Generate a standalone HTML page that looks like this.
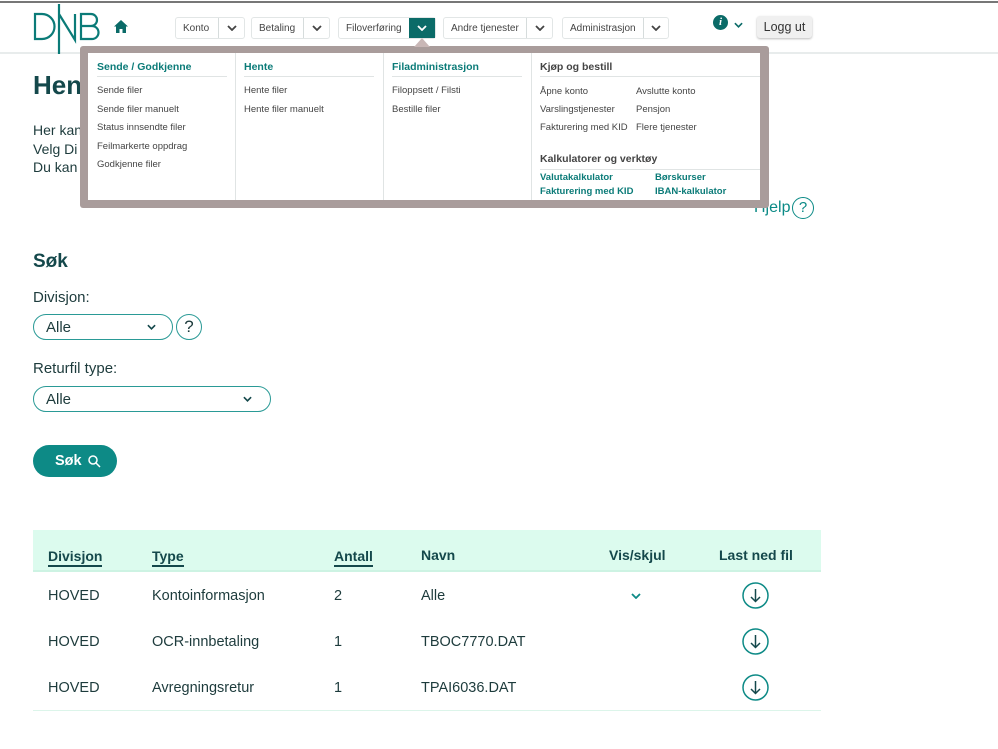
<!DOCTYPE html>
<html><head><meta charset="utf-8"><style>
*{margin:0;padding:0;box-sizing:border-box}
body{width:998px;height:749px;background:#fff;position:relative;overflow:hidden;font-family:"Liberation Sans",sans-serif;color:#1d3b3c}
.a{position:absolute;white-space:nowrap}
.nb{position:absolute;top:17px;height:22px;border:1px solid #e2e6e6;border-radius:3px;background:#fff;font-size:10px;color:#444;display:flex;align-items:center;white-space:nowrap}
.nb span{padding:0 7px;flex:1}
.nb i{border-left:1px solid #d6dcdc;height:100%;width:26px;display:flex;align-items:center;justify-content:center;flex:none}
.hd{font-size:10.5px;font-weight:bold;color:#0b7b78}
.lk{font-size:9.5px;color:#444}
.tl{font-size:9.5px;font-weight:bold;color:#0b7b78}
.th{font-size:14px;font-weight:bold;color:#14484b}
.u{border-bottom:2px solid #14484b;padding-bottom:1px}
.td{font-size:14.5px;color:#1d3b3c}
.sel{position:absolute;border:1.5px solid #2a9a96;border-radius:14px;height:26px;font-size:15px;padding:4px 12px}
</style></head><body>
<div class="a" style="left:0;top:1px;width:998px;height:2px;background:#777"></div>
<div class="a" style="left:0;top:52px;width:998px;height:2px;background:#e8ecec"></div>
<!-- logo -->
<svg class="a" style="left:30px;top:2px" width="80" height="54" viewBox="0 0 80 54">
<g fill="none" stroke="#0b7b78" stroke-width="2.2">
<path d="M5 12h7a12 12 0 0 1 0 25H5z"/>
<path d="M29 52V2M29 12l16 26V12"/>
<path d="M51 12h10a6 6 0 0 1 0 12H51zM51 24h11a6.5 6.5 0 0 1 0 13H51z"/>
</g></svg>
<svg class="a" style="left:114px;top:20px" width="14" height="13" viewBox="0 0 14 13"><path d="M7 0L0 6.5h2V13h3.5V9h3v4H12V6.5h2z" fill="#0b6b68"/></svg>
<svg width="0" height="0" style="position:absolute"><defs><symbol id="cv" viewBox="0 0 10 6"><path d="M1 1l4 4 4-4" fill="none" stroke="currentColor" stroke-width="1.8"/></symbol></defs></svg>
<div class="nb" style="left:175px;width:70px"><span>Konto</span><i><svg width="10" height="6" style="color:#444"><use href="#cv"/></svg></i></div>
<div class="nb" style="left:251px;width:79px"><span>Betaling</span><i><svg width="10" height="6" style="color:#444"><use href="#cv"/></svg></i></div>
<div class="nb" style="left:338px;width:98px"><span>Filoverføring</span><i style="background:#0b6b68;border:none"><svg width="10" height="6" style="color:#fff"><use href="#cv"/></svg></i></div>
<div class="nb" style="left:443px;width:110px"><span>Andre tjenester</span><i><svg width="10" height="6" style="color:#444"><use href="#cv"/></svg></i></div>
<div class="nb" style="left:562px;width:107px"><span>Administrasjon</span><i><svg width="10" height="6" style="color:#444"><use href="#cv"/></svg></i></div>
<div class="a" style="left:713px;top:15px;width:15px;height:15px;border-radius:50%;background:#0b6b68;color:#fff;font-size:11px;font-weight:bold;font-style:italic;text-align:center;line-height:15px;font-family:'Liberation Serif'">i</div>
<svg class="a" style="left:734px;top:22px;color:#0b6b68" width="9" height="6"><use href="#cv"/></svg>
<div class="a" style="left:757px;top:16px;width:55px;height:22px;background:#f0f0f0;border-radius:3px;box-shadow:0 1px 2px #bbb;font-size:12.5px;color:#333;text-align:center;line-height:22px">Logg ut</div>
<!-- page content -->
<div class="a" style="left:33px;top:70px;font-size:26px;font-weight:bold;color:#14484b">Hente filer</div>
<div class="a" style="left:33px;top:121px;font-size:14px;line-height:18.5px">Her kan<br>Velg Di<br>Du kan</div>
<div class="a" style="left:754px;top:199px;font-size:16px;color:#0b8a86">Hjelp</div>
<div class="a" style="left:792px;top:197px;width:22px;height:22px;border:1.5px solid #0b8a86;border-radius:50%;color:#0b8a86;font-size:15px;text-align:center;line-height:20px">?</div>
<!-- mega menu -->
<div class="a" style="left:80px;top:46px;width:689px;height:162px;background:#a99c9b;border-radius:3px"></div>
<div class="a" style="left:88px;top:53px;width:672px;height:147px;background:#fff"></div>
<div class="a" style="left:235px;top:53px;width:1px;height:147px;background:#e0e4e4"></div>
<div class="a" style="left:383px;top:53px;width:1px;height:147px;background:#e0e4e4"></div>
<div class="a" style="left:531px;top:53px;width:1px;height:147px;background:#e0e4e4"></div>
<div class="a" style="left:414px;top:38px;width:0;height:0;border:8px solid transparent;border-bottom:9px solid #c9b7b6;border-top:0"></div>
<div class="a hd" style="left:97px;top:61px">Sende / Godkjenne</div>
<div class="a" style="left:97px;top:76px;width:130px;height:1px;background:#e0e4e4"></div>
<div class="a lk" style="left:97px;top:82px;line-height:18.5px">Sende filer<br>Sende filer manuelt<br>Status innsendte filer<br>Feilmarkerte oppdrag<br>Godkjenne filer</div>
<div class="a hd" style="left:244px;top:61px">Hente</div>
<div class="a" style="left:244px;top:76px;width:130px;height:1px;background:#e0e4e4"></div>
<div class="a lk" style="left:244px;top:82px;line-height:18.5px">Hente filer<br>Hente filer manuelt</div>
<div class="a hd" style="left:392px;top:61px">Filadministrasjon</div>
<div class="a" style="left:392px;top:76px;width:130px;height:1px;background:#e0e4e4"></div>
<div class="a lk" style="left:392px;top:82px;line-height:18.5px">Filoppsett / Filsti<br>Bestille filer</div>
<div class="a hd" style="left:540px;top:61px;color:#444">Kjøp og bestill</div>
<div class="a" style="left:540px;top:76px;width:220px;height:1px;background:#e0e4e4"></div>
<div class="a lk" style="left:540px;top:83px;line-height:18px">Åpne konto<br>Varslingstjenester<br>Fakturering med KID</div>
<div class="a lk" style="left:636px;top:83px;line-height:18px">Avslutte konto<br>Pensjon<br>Flere tjenester</div>
<div class="a hd" style="left:540px;top:153px;color:#444">Kalkulatorer og verktøy</div>
<div class="a" style="left:540px;top:169px;width:220px;height:1px;background:#e0e4e4"></div>
<div class="a tl" style="left:540px;top:171px;line-height:13.5px">Valutakalkulator<br>Fakturering med KID</div>
<div class="a tl" style="left:655px;top:171px;line-height:13.5px">Børskurser<br>IBAN-kalkulator</div>
<!-- search -->
<div class="a" style="left:33px;top:251px;font-size:19px;font-weight:bold;color:#14484b">Søk</div>
<div class="a" style="left:33px;top:289px;font-size:15px">Divisjon:</div>
<div class="sel" style="left:33px;top:314px;width:140px">Alle<svg style="position:absolute;right:16px;top:9px;color:#14484b" width="9" height="6"><use href="#cv"/></svg></div>
<div class="a" style="left:176px;top:314px;width:26px;height:26px;border:1.5px solid #2a9a96;border-radius:50%;text-align:center;line-height:23px;font-size:17px">?</div>
<div class="a" style="left:33px;top:360px;font-size:15px">Returfil type:</div>
<div class="sel" style="left:33px;top:386px;width:238px">Alle<svg style="position:absolute;right:18px;top:9px;color:#14484b" width="9" height="6"><use href="#cv"/></svg></div>
<div class="a" style="left:33px;top:445px;width:84px;height:32px;border-radius:16px;background:#0d8a86;color:#fff;font-size:14.5px;font-weight:bold;line-height:32px;padding-left:22px">Søk
<svg style="position:absolute;left:55px;top:10px" width="13" height="13" viewBox="0 0 13 13"><circle cx="5" cy="5" r="4" fill="none" stroke="#fff" stroke-width="1.5"/><path d="M8 8l4 4" stroke="#fff" stroke-width="1.5"/></svg></div>
<!-- table -->
<div class="a" style="left:33px;top:530px;width:788px;height:42px;background:#dcfbee;border-bottom:2px solid #cdf3e3"></div>
<div class="a th" style="left:48px;top:548px"><span class="u">Divisjon</span></div>
<div class="a th" style="left:152px;top:548px"><span class="u">Type</span></div>
<div class="a th" style="left:334px;top:548px"><span class="u">Antall</span></div>
<div class="a th" style="left:421px;top:547px">Navn</div>
<div class="a th" style="left:609px;top:547px">Vis/skjul</div>
<div class="a th" style="left:719px;top:547px">Last ned fil</div>
<div class="a td" style="left:48px;top:588px">HOVED</div>
<div class="a td" style="left:152px;top:588px">Kontoinformasjon</div>
<div class="a td" style="left:334px;top:588px">2</div>
<div class="a td" style="left:421px;top:588px">Alle</div>
<svg class="a" style="left:631px;top:593px;color:#0d8a86" width="10" height="6"><use href="#cv"/></svg>
<div class="a td" style="left:48px;top:634px">HOVED</div>
<div class="a td" style="left:152px;top:634px">OCR-innbetaling</div>
<div class="a td" style="left:334px;top:634px">1</div>
<div class="a td" style="left:421px;top:634px">TBOC7770.DAT</div>
<div class="a td" style="left:48px;top:680px">HOVED</div>
<div class="a td" style="left:152px;top:680px">Avregningsretur</div>
<div class="a td" style="left:334px;top:680px">1</div>
<div class="a td" style="left:421px;top:680px">TPAI6036.DAT</div>
<svg class="a" style="left:742px;top:582px" width="27" height="27" viewBox="0 0 27 27"><circle cx="13.5" cy="13.5" r="12.5" fill="none" stroke="#0d8a86" stroke-width="1.5"/><path d="M13.5 7v12M9 15l4.5 4.5L18 15" fill="none" stroke="#14484b" stroke-width="1.5"/></svg>
<svg class="a" style="left:742px;top:628px" width="27" height="27" viewBox="0 0 27 27"><circle cx="13.5" cy="13.5" r="12.5" fill="none" stroke="#0d8a86" stroke-width="1.5"/><path d="M13.5 7v12M9 15l4.5 4.5L18 15" fill="none" stroke="#14484b" stroke-width="1.5"/></svg>
<svg class="a" style="left:742px;top:674px" width="27" height="27" viewBox="0 0 27 27"><circle cx="13.5" cy="13.5" r="12.5" fill="none" stroke="#0d8a86" stroke-width="1.5"/><path d="M13.5 7v12M9 15l4.5 4.5L18 15" fill="none" stroke="#14484b" stroke-width="1.5"/></svg>
<div class="a" style="left:33px;top:710px;width:788px;height:1px;background:#dcf5ea"></div>
</body></html>
